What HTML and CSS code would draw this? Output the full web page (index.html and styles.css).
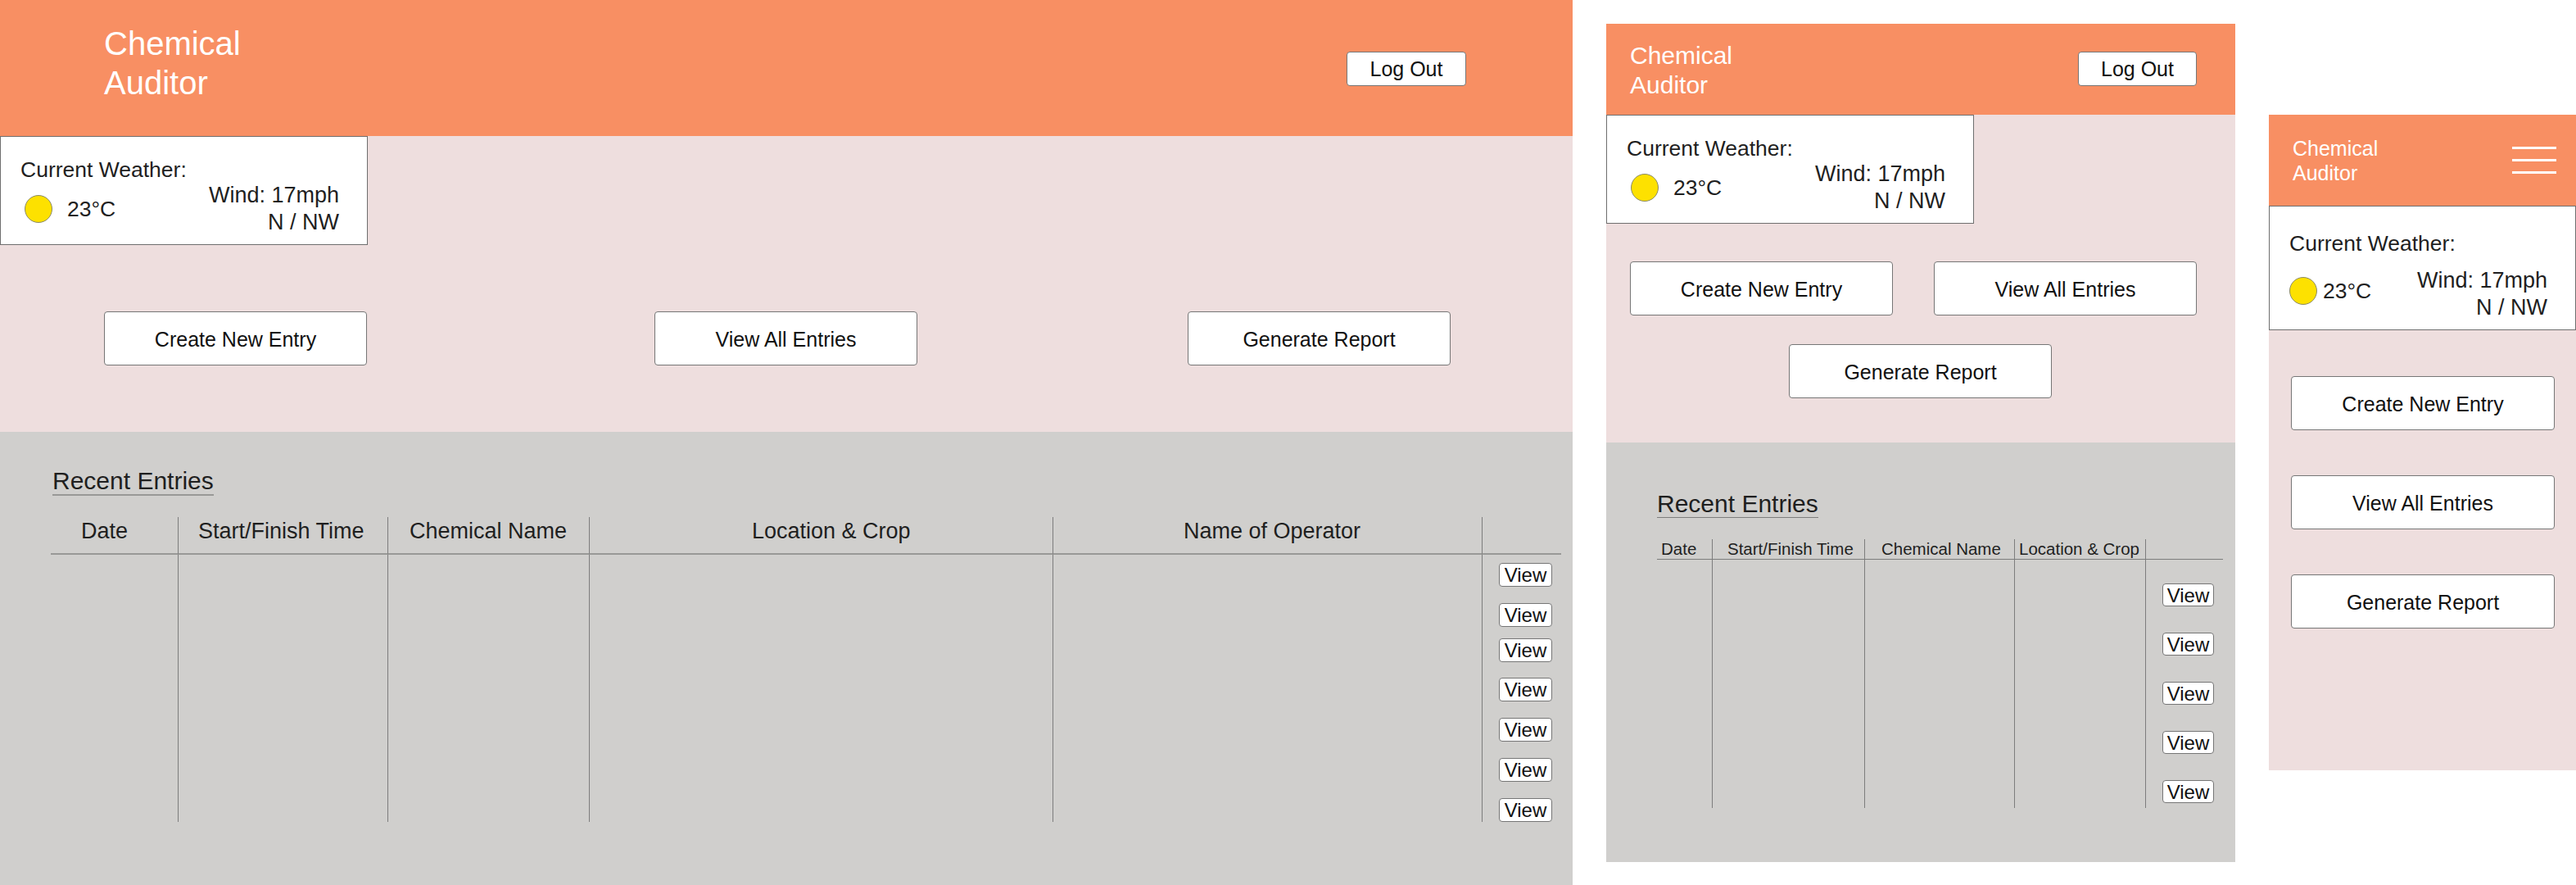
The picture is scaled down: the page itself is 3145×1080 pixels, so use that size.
FILE: index.html
```html
<!DOCTYPE html>
<html>
<head>
    <title>Chemical Auditor</title>
    <meta charset="utf-8">
    <link rel="stylesheet" href="styles.css">
</head>
<body>
    <!-- DESKTOP -->
    <div class="board board-wide">
        <div class="top-bar">
            <div class="title">Chemical<br>Auditor</div>
            <button class="log-out">Log Out</button>
        </div>
        <div class="pink-area">
            <div class="weather">
                <div class="weather-left">
                    <div>Current Weather:</div>
                    <div class="temp"><span class="sun"></span><span>23°C</span></div>
                </div>
                <div class="wind">Wind: 17mph<br>N / NW</div>
            </div>
            <div class="actions">
                <button class="action">Create New Entry</button>
                <button class="action">View All Entries</button>
                <button class="action">Generate Report</button>
            </div>
        </div>
        <div class="recent">
            <h2>Recent Entries</h2>
            <table class="entries">
                <thead>
                    <tr>
                        <th class="col-date">Date</th>
                        <th class="col-time">Start/Finish Time</th>
                        <th class="col-chem">Chemical Name</th>
                        <th class="col-place">Location &amp; Crop</th>
                        <th class="col-name">Name of Operator</th>
                        <th class="col-view"></th>
                    </tr>
                </thead>
                <tbody>
                    <tr>
                        <td></td><td></td><td></td><td></td><td></td>
                        <td class="col-view">
                            <div class="view-list">
                                <button class="view">View</button>
                                <button class="view">View</button>
                                <button class="view">View</button>
                                <button class="view">View</button>
                                <button class="view">View</button>
                                <button class="view">View</button>
                                <button class="view">View</button>
                            </div>
                        </td>
                    </tr>
                </tbody>
            </table>
        </div>
    </div>

    <!-- TABLET -->
    <div class="board board-tablet">
        <div class="top-bar">
            <div class="title">Chemical<br>Auditor</div>
            <button class="log-out">Log Out</button>
        </div>
        <div class="pink-area">
            <div class="weather">
                <div class="weather-left">
                    <div>Current Weather:</div>
                    <div class="temp"><span class="sun"></span><span>23°C</span></div>
                </div>
                <div class="wind">Wind: 17mph<br>N / NW</div>
            </div>
            <div class="actions">
                <button class="action">Create New Entry</button>
                <button class="action">View All Entries</button>
                <button class="action">Generate Report</button>
            </div>
        </div>
        <div class="recent">
            <h2>Recent Entries</h2>
            <table class="entries">
                <thead>
                    <tr>
                        <th class="col-date">Date</th>
                        <th class="col-time">Start/Finish Time</th>
                        <th class="col-chem">Chemical Name</th>
                        <th class="col-place">Location &amp; Crop</th>
                        <th class="col-view"></th>
                    </tr>
                </thead>
                <tbody>
                    <tr>
                        <td></td><td></td><td></td><td></td>
                        <td class="col-view">
                            <div class="view-list">
                                <button class="view">View</button>
                                <button class="view">View</button>
                                <button class="view">View</button>
                                <button class="view">View</button>
                                <button class="view">View</button>
                            </div>
                        </td>
                    </tr>
                </tbody>
            </table>
        </div>
    </div>

    <!-- PHONE -->
    <div class="board board-phone">
        <div class="top-bar">
            <div class="title">Chemical<br>Auditor</div>
            <div class="burger"><span></span><span></span><span></span></div>
        </div>
        <div class="pink-area">
            <div class="weather">
                <div class="weather-left">
                    <div>Current Weather:</div>
                    <div class="temp"><span class="sun"></span><span>23°C</span></div>
                </div>
                <div class="wind">Wind: 17mph<br>N / NW</div>
            </div>
            <div class="actions">
                <button class="action">Create New Entry</button>
                <button class="action">View All Entries</button>
                <button class="action">Generate Report</button>
            </div>
        </div>
    </div>
</body>
</html>
```

FILE: styles.css
```css
* {
    box-sizing: border-box;
}

body {
    margin: 0;
    display: flex;
    align-items: flex-start;
    gap: 41px;
    height: 1080px;
    overflow: hidden;
    background: #ffffff;
    color: #1f1f1f;
    font-family: "Liberation Sans", Arial, sans-serif;
}

button {
    font-family: inherit;
    color: #111;
    background: #ffffff;
    border: 1px solid #767676;
    border-radius: 4px;
    padding: 0;
}

.board {
    flex: none;
}

.board-wide {
    width: 1920px;
    height: 1080px;
}

.board-tablet {
    width: 768px;
    height: 1023px;
    margin-top: 29px;
}

.board-phone {
    width: 375px;
    height: 800px;
    margin-top: 140px;
}

/* Orange bar */
.top-bar {
    display: flex;
    justify-content: space-between;
    align-items: flex-start;
    background: #f88f63;
    color: #ffffff;
    height: 111px;
}

.board-wide .top-bar {
    height: 166px;
    padding: 29px 130px 0 127px;
    font-size: 40px;
    line-height: 48px;
}

.board-tablet .top-bar {
    padding: 21px 47px 0 29px;
    font-size: 30px;
    line-height: 36px;
}

.board-phone .top-bar {
    padding: 26px 24px 0 29px;
    font-size: 25px;
    line-height: 30px;
}

.log-out {
    font-size: 25px;
    height: 42px;
    width: 146px;
    padding-top: 1px;
}

.board-wide .log-out {
    margin-top: 34px;
}

.board-tablet .log-out {
    margin-top: 13px;
    width: 145px;
}

.burger {
    display: flex;
    flex-direction: column;
    gap: 12px;
    width: 54px;
    margin-top: 13px;
}

.burger span {
    height: 3px;
    background: #ffffff;
}

/* Pink area */
.pink-area {
    background: #eedede;
}

.board-wide .pink-area {
    height: 361px;
}

.board-tablet .pink-area {
    height: 400px;
}

.board-phone .pink-area {
    height: 689px;
}

.weather {
    display: flex;
    justify-content: space-between;
    width: 449px;
    height: 133px;
    padding: 24px 34px 10px 24px;
    background: #ffffff;
    border: 1px solid #6e6e6e;
    font-size: 26.5px;
    line-height: 33px;
    white-space: nowrap;
}

.weather-left {
    display: flex;
    flex-direction: column;
    gap: 14px;
}

.temp {
    display: flex;
    align-items: center;
    gap: 18px;
    margin-left: 5px;
    height: 34px;
}

.sun {
    width: 34px;
    height: 34px;
    border-radius: 50%;
    background: #fde100;
    border: 1px solid #8a8a6a;
}

.wind {
    align-self: flex-end;
    text-align: right;
    font-size: 27px;
}

.board-phone .weather {
    width: 375px;
    height: 152px;
    padding-top: 29px;
}

/* heading runs on over the wind column on the narrow card */
.board-phone .weather-left {
    width: 140px;
    gap: 24px;
}

.board-phone .temp {
    gap: 7px;
    margin-left: 0;
}

/* Big buttons */
.action {
    width: 321px;
    height: 66px;
    font-size: 25px;
    padding-top: 2px;
}

.actions {
    display: flex;
}

.board-wide .actions {
    margin-top: 81px;
    padding-left: 127px;
    gap: 330px;
}

.board-wide .action:first-child {
    margin-right: 21px;
}

.board-tablet .actions {
    flex-wrap: wrap;
    justify-content: center;
    width: 692px;
    margin: 46px 0 0 29px;
    gap: 35px 50px;
}

.board-tablet .action:last-child {
    margin-left: 17px;
}

.board-phone .actions {
    flex-direction: column;
    gap: 55px;
    margin: 56px 0 0 27px;
}

.board-phone .action {
    width: 322px;
}

/* Recent entries */
.recent {
    background: #d0cfcd;
    padding-left: 62px;
}

.board-wide .recent {
    height: 553px;
    padding-top: 44px;
}

.board-tablet .recent {
    height: 512px;
    padding-top: 58px;
}

h2 {
    display: inline-block;
    margin: 0 0 26px 0;
    font-size: 30px;
    font-weight: normal;
    line-height: 32px;
    vertical-align: top;
}

.board-wide h2 {
    margin-left: 2px;
    border-bottom: 2px solid #999997;
}

.board-tablet h2 {
    border-bottom: 1px solid #7d7d7d;
    line-height: 33px;
}

.entries {
    display: table;
    border-collapse: separate;
    border-spacing: 0;
    table-layout: fixed;
}

.entries th {
    font-weight: normal;
    text-align: left;
    vertical-align: top;
    white-space: nowrap;
    border-right: 1px solid #7d7d7d;
}

.entries td {
    padding: 0;
    vertical-align: top;
    border-right: 1px solid #7d7d7d;
}

.entries .col-view {
    border-right: none;
}

.view-list {
    display: flex;
    flex-direction: column;
}

.view {
    font-size: 24px;
}

/* Desktop table */
.board-wide .entries {
    width: 1844px;
}

.board-wide .entries th {
    height: 46px;
    padding-top: 1px;
    font-size: 27px;
    line-height: 32px;
    border-bottom: 2px solid #999997;
}

.board-wide .entries td {
    height: 325px;
}

.board-wide .col-date { width: 156px; padding-left: 37px; }
.board-wide .col-time { width: 256px; padding-left: 24px; }
.board-wide .col-chem { width: 246px; padding-left: 26px; }
.board-wide .col-place { width: 566px; padding-left: 198px; }
.board-wide .col-name { width: 524px; padding-left: 159px; }
.board-wide .col-view { width: 96px; }

.board-wide td.col-view {
    padding: 10px 0 0 20px;
}

.board-wide .view-list {
    gap: 20px;
}

.board-wide .view {
    width: 65px;
    height: 29px;
}

/* these two sit a bit closer in the mockup */
.board-wide .view:nth-child(3) {
    margin-top: -6px;
}

.board-wide .view:nth-child(4) {
    margin-top: -1px;
}

/* Tablet table */
.board-tablet .entries {
    width: 691px;
}

.board-tablet .entries th {
    height: 23px;
    font-size: 20.5px;
    line-height: 22px;
    border-bottom: 1px solid #7d7d7d;
}

.board-tablet .entries td {
    height: 303px;
}

.board-tablet .col-date { width: 68px; padding-left: 5px; }
.board-tablet .col-time { width: 186px; padding-left: 18px; }
.board-tablet .col-chem { width: 183px; padding-left: 20px; }
.board-tablet .col-place { width: 160px; padding-left: 5px; }
.board-tablet .col-view { width: 94px; }

.board-tablet td.col-view {
    padding: 29px 0 0 20px;
}

.board-tablet .view-list {
    gap: 32px;
}

.board-tablet .view {
    width: 63px;
    height: 28px;
}
```
